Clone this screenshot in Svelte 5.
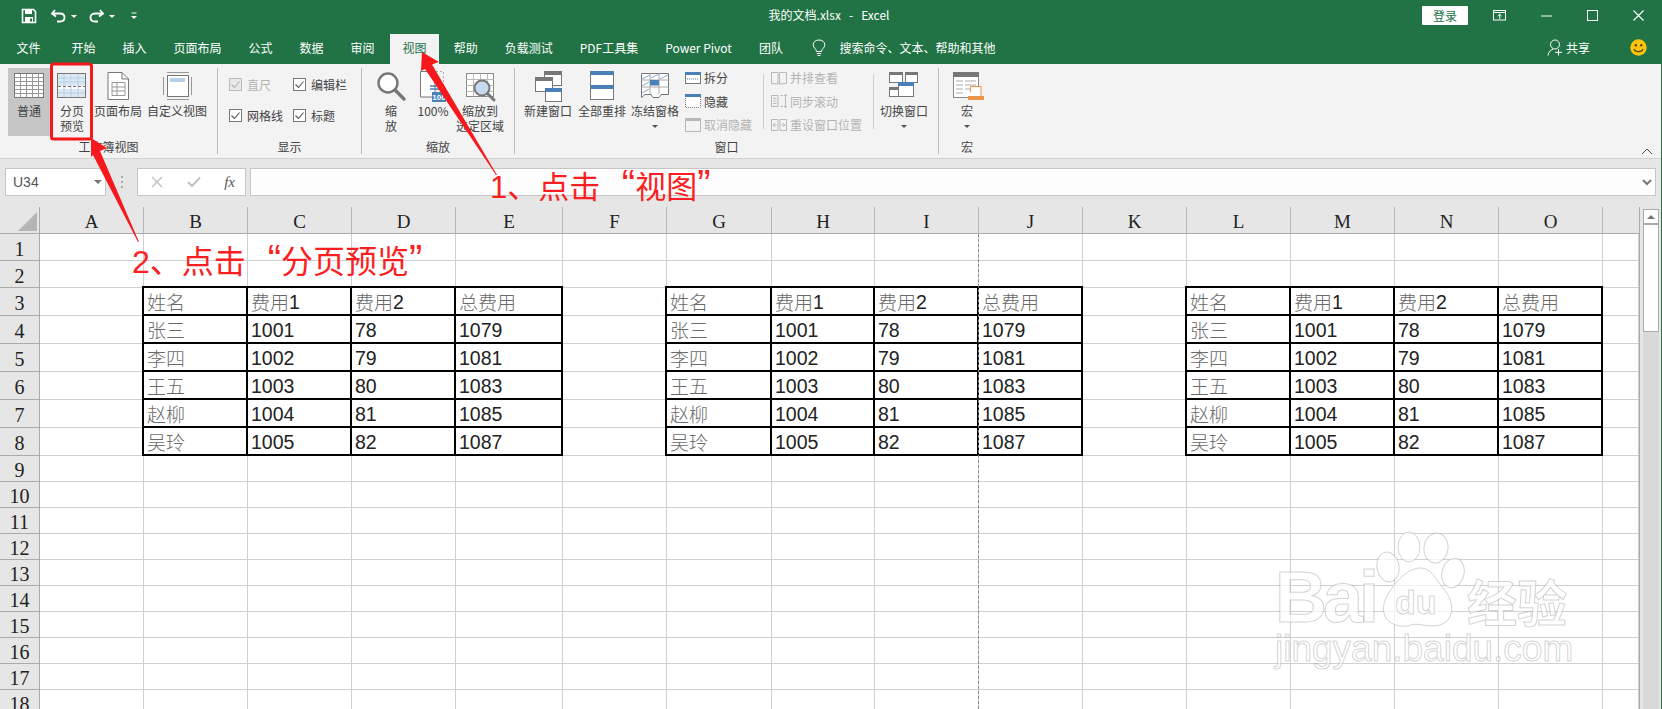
<script>
  const letters = ['A','B','C','D','E','F','G','H','I','J','K','L','M','N','O','P'];
  const rowNums = Array.from({ length: 18 }, (_, i) => i + 1);
  const data = [
    ['姓名','费用1','费用2','总费用'],
    ['张三','1001','78','1079'],
    ['李四','1002','79','1081'],
    ['王五','1003','80','1083'],
    ['赵柳','1004','81','1085'],
    ['吴玲','1005','82','1087']
  ];
  const inTable = (r, c) => r >= 3 && r <= 8 && c % 5 !== 0 && c < 15;
  const value = (r, c) => {
    const m = data[r - 3][c % 5 - 1].match(/^(\D*)(\d*)$/);
    return { cn: m[1], num: m[2] };
  };
  const tabs = ['开始','插入','页面布局','公式','数据','审阅','视图','帮助','负载测试','PDF工具集','Power Pivot','团队'];
  const gridD = (x0, y0, w, h, dx, dy) => {
    let d = '';
    for (let x = x0 + dx; x < x0 + w; x += dx) d += `M${x} ${y0}V${y0 + h}`;
    for (let y = y0 + dy; y < y0 + h; y += dy) d += `M${x0} ${y}H${x0 + w}`;
    return d;
  };
</script>

<div class="page">
  <header class="head">
    <div class="titlebar">
      <div class="qat">
        <svg class="save" width="16" height="16" viewBox="0 0 16 16"><path d="M1.5 1.5H12.5L14.5 3.5V14.5H1.5Z" fill="none" stroke="#fff" stroke-width="1.6"/><rect x="4" y="2" width="7" height="4" fill="#fff"/><rect x="4" y="9" width="8" height="5" fill="#fff"/><rect x="9" y="10.5" width="2" height="3" fill="#217346"/></svg>
        <svg class="undo" width="17" height="16" viewBox="0 0 17 16"><path d="M5 2L2 5.5L6 8.5M2.5 5.5H10C13 5.5 14.5 7.5 14.5 9.5C14.5 11.5 13 13.5 10 13.5H7" fill="none" stroke="#fff" stroke-width="1.8"/></svg>
        <span class="tri"></span>
        <svg class="redo" width="17" height="16" viewBox="0 0 17 16"><path d="M12 2L15 5.5L11 8.5M14.5 5.5H7C4 5.5 2.5 7.5 2.5 9.5C2.5 11.5 4 13.5 7 13.5H10" fill="none" stroke="#fff" stroke-width="1.8"/></svg>
        <span class="tri"></span>
        <svg class="more" width="8" height="8" viewBox="0 0 8 8"><path d="M1.5 1H6.5" stroke="#fff"/><path d="M1 4H7L4 7Z" fill="#fff"/></svg>
      </div>
      <div class="doc">我的文档.xlsx&nbsp;&nbsp;&nbsp;-&nbsp;&nbsp;&nbsp;Excel</div>
      <div class="win">
        <div class="login">登录</div>
        <div class="wbtn"><svg width="14" height="11" viewBox="0 0 14 11"><rect x=".5" y=".5" width="12" height="9.5" fill="none" stroke="#fff"/><path d="M1 2.5H12.5" stroke="#fff"/><path d="M6.7 9V4.5M4.8 6L6.7 4.2L8.6 6" fill="none" stroke="#fff"/></svg></div>
        <div class="wbtn"><svg width="11" height="2" viewBox="0 0 11 2"><path d="M0 1H11" stroke="#fff"/></svg></div>
        <div class="wbtn"><svg width="11" height="11" viewBox="0 0 11 11"><rect x=".5" y=".5" width="10" height="10" fill="none" stroke="#fff"/></svg></div>
        <div class="wbtn"><svg width="11" height="11" viewBox="0 0 11 11"><path d="M.5 .5L10.5 10.5M10.5 .5L.5 10.5" stroke="#fff" stroke-width="1.1"/></svg></div>
      </div>
    </div>
    <nav class="tabs">
      <div class="tab first">文件</div>
      {#each tabs as t}
        <div class="tab" class:active={t === '视图'}>{t}</div>
      {/each}
      <svg class="bulb" width="14" height="18" viewBox="0 0 14 18"><path d="M4.5 12.5C4.5 10 1.2 9 1.2 5.8C1.2 3 3.7 1 7 1C10.3 1 12.8 3 12.8 5.8C12.8 9 9.5 10 9.5 12.5ZM4.8 14.5H9.2M5.5 16.5H8.5" fill="none" stroke="#fff"/></svg>
      <div class="search">搜索命令、文本、帮助和其他</div>
      <div class="share">
        <svg width="16" height="17" viewBox="0 0 16 17"><circle cx="8" cy="5.5" r="4.5" fill="none" stroke="#fff"/><path d="M1 16.5C1.5 13 3.5 11 6 10.2" fill="none" stroke="#fff"/><path d="M11.5 10V16.5M8 13.3H15" stroke="#fff"/></svg>
        <span>共享</span>
      </div>
      <svg class="smile" width="17" height="17" viewBox="0 0 17 17"><circle cx="8.5" cy="8.5" r="8.2" fill="#fcc30f"/><circle cx="5.8" cy="6.3" r="1.2" fill="#5a4300"/><circle cx="11.2" cy="6.3" r="1.2" fill="#5a4300"/><path d="M4 10C5 13.5 12 13.5 13 10" fill="none" stroke="#5a4300" stroke-width="1.1"/></svg>
    </nav>
  </header>

  <section class="ribbon">
    <div class="group g1">
      <div class="body">
        <div class="big selected" style="--w:42px">
          <svg width="36" height="36" viewBox="0 0 36 36"><rect x="3.5" y="5.5" width="29" height="24" fill="#fff" stroke="#777"/><path d={gridD(3.5, 5.5, 29, 24, 6, 4)} stroke="#999" fill="none"/></svg>
          <span>普通</span>
        </div>
        <div class="big split" style="--w:40px">
          <svg width="36" height="36" viewBox="0 0 36 36"><rect x="3.5" y="5.5" width="28" height="24" fill="#fff" stroke="#777"/><rect x="4" y="6" width="13" height="12" fill="#dde8f5"/><rect x="18" y="6" width="13" height="12" fill="#dde8f5"/><rect x="4" y="21" width="27" height="8" fill="#dde8f5"/><path d="M10 6V29M17 6V29M24 6V29M4 10H31M4 14H31M4 25H31" stroke="#b8cde4" fill="none"/><path d="M4 18.5H31" stroke="#777" stroke-dasharray="3 2"/></svg>
          <span>分页<br/>预览</span>
        </div>
        <div class="big" style="--w:48px">
          <svg width="36" height="36" viewBox="0 0 36 36"><path d="M8 4.5H22L28.5 11V31.5H8Z" fill="#fff" stroke="#777"/><path d="M22 4.5V11H28.5" fill="none" stroke="#777"/><path d="M12 14.5H25V27.5H12ZM12 19H25M12 23H25M17 14.5V27.5" fill="none" stroke="#999"/></svg>
          <span>页面布局</span>
        </div>
        <div class="big custom" style="--w:62px">
          <svg width="36" height="36" viewBox="0 0 36 36"><rect x="8.5" y="7.5" width="21" height="21" fill="#fff" stroke="#777"/><rect x="11" y="10" width="15" height="4" fill="#b8cfe6"/><path d="M4.5 9V27M32.5 9V27M8 4.5H30M8 31.5H30" stroke="#999" fill="none"/></svg>
          <span>自定义视图</span>
        </div>
      </div>
      <div class="glabel">工作簿视图</div>
    </div>

    <div class="group g2">
      <div class="body checks">
        <div class="ck off"><i><svg width="11" height="11" viewBox="0 0 11 11"><path d="M1.5 5.5L4.5 8.5L9.5 2.5" fill="none" stroke="#b5b5b5" stroke-width="1.1"/></svg></i>直尺</div>
        <div class="ck"><i><svg width="11" height="11" viewBox="0 0 11 11"><path d="M1.5 5.5L4.5 8.5L9.5 2.5" fill="none" stroke="#555" stroke-width="1.1"/></svg></i>编辑栏</div>
        <div class="ck"><i><svg width="11" height="11" viewBox="0 0 11 11"><path d="M1.5 5.5L4.5 8.5L9.5 2.5" fill="none" stroke="#555" stroke-width="1.1"/></svg></i>网格线</div>
        <div class="ck"><i><svg width="11" height="11" viewBox="0 0 11 11"><path d="M1.5 5.5L4.5 8.5L9.5 2.5" fill="none" stroke="#555" stroke-width="1.1"/></svg></i>标题</div>
      </div>
      <div class="glabel">显示</div>
    </div>

    <div class="group g3">
      <div class="body">
        <div class="big" style="--w:48px">
          <svg width="36" height="36" viewBox="0 0 36 36"><circle cx="15" cy="15" r="9.5" fill="#fff" stroke="#777" stroke-width="2.4"/><path d="M22 22L31 31" stroke="#777" stroke-width="3.4" stroke-linecap="round"/></svg>
          <span>缩<br/>放</span>
        </div>
        <div class="big" style="--w:36px">
          <svg width="36" height="36" viewBox="0 0 36 36"><path d="M5.5 3.5H20V29H5.5Z" fill="#fff" stroke="#777"/><path d="M21 3.5H28.5V24" fill="none" stroke="#aaa" stroke-dasharray="2 2"/><path d="M15 18H24M15 21H24" stroke="#4a7fb7" stroke-width="1.4"/><rect x="17" y="24" width="14" height="10" fill="#4a7fb7"/><text x="24" y="32" class="badge">100</text></svg>
          <span>100%</span>
        </div>
        <div class="big" style="--w:58px">
          <svg width="36" height="36" viewBox="0 0 36 36"><rect x="4.5" y="5.5" width="27" height="23" fill="#fff" stroke="#8a8a8a"/><path d={gridD(4.5, 5.5, 27, 23, 7, 6)} stroke="#bbb" fill="none"/><circle cx="20" cy="20" r="7.5" fill="#c5d9ef" stroke="#777" stroke-width="2"/><path d="M25.5 25.5L32 32" stroke="#777" stroke-width="3" stroke-linecap="round"/></svg>
          <span>缩放到<br/>选定区域</span>
        </div>
      </div>
      <div class="glabel">缩放</div>
    </div>

    <div class="group g4">
      <div class="body">
        <div class="big" style="--w:54px">
          <svg width="36" height="36" viewBox="0 0 36 36"><rect x="14.5" y="3.5" width="17" height="14" fill="#fff" stroke="#777"/><rect x="14" y="3" width="18" height="4" fill="#777"/><rect x="5.5" y="9.5" width="17" height="14" fill="#fff" stroke="#777"/><rect x="5" y="9" width="18" height="4" fill="#777"/><rect x="15.5" y="20.5" width="16" height="13" fill="#fff" stroke="#777"/><rect x="15" y="20" width="17" height="4" fill="#4a7fb7"/></svg>
          <span>新建窗口</span>
        </div>
        <div class="big" style="--w:54px">
          <svg width="36" height="36" viewBox="0 0 36 36"><rect x="6.5" y="3.5" width="23" height="28" fill="#fff" stroke="#777"/><rect x="6" y="3" width="24" height="4" fill="#4a7fb7"/><rect x="6" y="17" width="24" height="4" fill="#4a7fb7"/></svg>
          <span>全部重排</span>
        </div>
        <div class="big" style="--w:52px">
          <svg width="36" height="36" viewBox="0 0 36 36"><path d="M4.5 5.5H31.5V26.5H24L22 29.5H16L14 26.5H8L4.5 29.5Z" fill="#fff" stroke="#777"/><path d="M4.5 12H31.5M4.5 19H31.5M13 5.5V26M22 5.5V26" stroke="#aaa" fill="none"/><rect x="13" y="12" width="9" height="5.5" fill="#4a7fb7"/><path d="M5 11L13 7M14 10L22 6M23 11L31 7M5 18L12 14M5 25L12 21" stroke="#9dbbdb" stroke-width="1.2" fill="none"/></svg>
          <span>冻结窗格</span>
          <b class="caret"></b>
        </div>
        <div class="smalls">
          <div class="sm"><svg width="16" height="14" viewBox="0 0 16 14"><rect x=".5" y="1.5" width="15" height="11" fill="#fff" stroke="#777"/><rect x="0" y="1" width="16" height="3" fill="#4a7fb7"/><path d="M2 8H14" stroke="#4a7fb7" stroke-dasharray="1 1"/></svg>拆分</div>
          <div class="sm"><svg width="16" height="14" viewBox="0 0 16 14"><path d="M.5 2V13.5H15.5V2" fill="#fff" stroke="#777" stroke-dasharray="1 1"/><rect x="0" y="0" width="16" height="3" fill="#4a7fb7"/></svg>隐藏</div>
          <div class="sm off"><svg width="16" height="14" viewBox="0 0 16 14"><rect x=".5" y=".5" width="15" height="13" fill="none" stroke="#b9b9b9"/><rect x="0" y="0" width="16" height="3" fill="#b9b9b9"/></svg>取消隐藏</div>
        </div>
        <div class="vsep"></div>
        <div class="smalls second">
          <div class="sm off"><svg width="16" height="14" viewBox="0 0 16 14"><path d="M.5 1.5H7V13L.5 12.5ZM8.5 1.5H15.5V12.5L8.5 13Z" fill="none" stroke="#b9b9b9"/></svg>并排查看</div>
          <div class="sm off"><svg width="16" height="14" viewBox="0 0 16 14"><path d="M.5 1.5H7V12.5H.5ZM9.5 1.5H12M9.5 12.5H12M14.5 0V14M13 2L14.5 .5L16 2M13 12L14.5 13.5L16 12M2 4.5H5.5M2 7H5.5M2 9.5H5.5" fill="none" stroke="#b9b9b9"/></svg>同步滚动</div>
          <div class="sm off"><svg width="16" height="14" viewBox="0 0 16 14"><path d="M.5 1.5H7V12.5H.5ZM9 1.5H15.5V12.5H9ZM2 7H5.5M4 5L2 7L4 9M10.5 7H14M12 5L14 7L12 9" fill="none" stroke="#b9b9b9"/></svg>重设窗口位置</div>
        </div>
        <div class="vsep"></div>
        <div class="big" style="--w:60px">
          <svg width="36" height="36" viewBox="0 0 36 36"><rect x="3.5" y="4.5" width="13" height="10" fill="#fff" stroke="#777"/><rect x="3" y="4" width="14" height="3" fill="#777"/><rect x="19.5" y="4.5" width="12" height="10" fill="#fff" stroke="#777"/><rect x="19" y="4" width="13" height="3" fill="#777"/><rect x="3.5" y="19.5" width="10" height="9" fill="#fff" stroke="#777"/><rect x="3" y="19" width="11" height="3" fill="#777"/><rect x="12.5" y="14.5" width="15" height="14" fill="#fff" stroke="#777"/><rect x="12" y="14" width="16" height="4" fill="#4a7fb7"/></svg>
          <span>切换窗口</span>
          <b class="caret"></b>
        </div>
      </div>
      <div class="glabel">窗口</div>
    </div>

    <div class="group g5">
      <div class="body">
        <div class="big" style="--w:56px">
          <svg width="36" height="36" viewBox="0 0 36 36"><rect x="4.5" y="5.5" width="25" height="24" fill="#fff" stroke="#8a8a8a"/><rect x="4" y="4" width="26" height="5" fill="#777"/><path d="M7 13H14M16 13H27M7 17H14M16 17H27M7 21H14M16 21H22M7 25H14" stroke="#aaa"/><path d="M21.5 24V18.5H32V30" fill="#fff" stroke="#e8964b"/><rect x="19" y="28" width="16" height="4" fill="#e8964b"/></svg>
          <span>宏</span>
          <b class="caret"></b>
        </div>
      </div>
      <div class="glabel">宏</div>
    </div>
    <svg class="collapse" width="12" height="7" viewBox="0 0 12 7"><path d="M1 6L6 1L11 6" fill="none" stroke="#555"/></svg>
  </section>

  <section class="fbar">
    <div class="namebox"><span>U34</span><b class="caret dark"></b></div>
    <div class="dots"></div>
    <div class="fbtns">
      <svg width="12" height="12" viewBox="0 0 12 12"><path d="M1 1L11 11M11 1L1 11" stroke="#c4c4c4" stroke-width="1.6"/></svg>
      <svg width="14" height="12" viewBox="0 0 14 12"><path d="M1 6L5 10L13 1.5" fill="none" stroke="#c4c4c4" stroke-width="2"/></svg>
      <span class="fx">fx</span>
    </div>
    <div class="finput"><svg width="10" height="7" viewBox="0 0 10 7"><path d="M1 1L5 5L9 1" fill="none" stroke="#777" stroke-width="2"/></svg></div>
  </section>

  <main class="sheetwrap">
    <div class="sheet">
      <div class="corner"><i></i></div>
      {#each letters as l}
        <div class="ch">{l === 'P' ? '' : l}</div>
      {/each}
      {#each rowNums as r}
        <div class="rh">{r}</div>
        {#each letters as _, c}
          {#if inTable(r, c)}
            {@const v = value(r, c)}
            <div class="cell t"><span class="cn">{v.cn}</span><span class="num">{v.num}</span></div>
          {:else}
            <div class="cell"></div>
          {/if}
        {/each}
      {/each}
    </div>
    <aside class="vscroll">
      <div class="sb"><b></b></div>
      <div class="thumb"></div>
      <div class="track"></div>
    </aside>
  </main>

  <div class="pagebreak"></div>

  <div class="wm">
    <svg class="paw" width="100" height="100" viewBox="0 0 100 100"><g fill="rgba(255,255,255,.7)" stroke="rgba(150,150,150,.42)"><ellipse cx="18" cy="37" rx="11" ry="15" transform="rotate(-10 18 37)"/><ellipse cx="39" cy="17" rx="11" ry="15"/><ellipse cx="66" cy="18" rx="12" ry="15" transform="rotate(8 66 18)"/><ellipse cx="83" cy="43" rx="11" ry="15" transform="rotate(14 83 43)"/><path d="M50 38C62 38 66 50 76 62C86 76 84 96 62 96C54 96 46 92 38 96C20 98 8 86 16 68C22 56 36 38 50 38Z"/></g></svg>
    <span class="bai">Bai</span>
    <span class="du">du</span>
    <span class="jy">经验</span>
    <span class="url">jingyan.baidu.com</span>
  </div>

  <svg class="marks" width="1662" height="709" viewBox="0 0 1662 709">
    <rect x="51.5" y="64" width="40" height="75" rx="2" fill="none" stroke="#f5181c" stroke-width="3"/>
    <path d="M422 52L439 62L432 64.5L497 175L496 175L425 69L421 71Z" fill="#f5181c"/>
    <path d="M91 138L107 148L100 151L139 242L138 242L93 155L91 157Z" fill="#f5181c"/>
  </svg>
  <div class="note n1">1、点击 <span class="q open">“</span>视图<span class="q">”</span></div>
  <div class="note n2">2、点击 <span class="q open">“</span>分页预览<span class="q">”</span></div>
</div>

<style>
  :global(body) { margin: 0; background: #fff; }
  .page {
    position: relative; width: 1662px; height: 709px; overflow: hidden;
    font: 12px/15px "Noto Sans CJK SC", "Liberation Sans", sans-serif; color: #444;
  }
  .head { background: #217346; color: #fff; height: 64px; }
  .titlebar { height: 34px; display: grid; grid-template-columns: 1fr auto 1fr; align-items: center; }
  .qat { display: flex; align-items: center; padding: 0 0 2px 21px; }
  .undo { margin-left: 13px; }
  .redo { margin-left: 11px; }
  .tri { width: 0; height: 0; border: 3px solid transparent; border-top-color: #fff; border-bottom: 0; margin-left: 4px; }
  .more { margin-left: 15px; }
  .doc { padding: 0 4px 5px 0; font-size: 12px; }
  .win { display: flex; justify-content: flex-end; align-items: center; padding: 0 1px 3px 0; }
  .login { width: 46px; height: 19px; line-height: 19px; background: #fff; color: #217346; text-align: center; border-radius: 1px; margin-right: 9px; font-size: 12px; }
  .wbtn { width: 46px; height: 30px; display: flex; align-items: center; justify-content: center; }
  .tabs { height: 30px; display: flex; align-items: center; padding-left: 3px; position: relative; }
  .tab { padding: 0 13.5px; height: 30px; line-height: 27px; white-space: nowrap; }
  .tab.first { margin-right: 4px; }
  .tab.active { background: #f3f3f3; color: #217346; padding: 0 12.5px; margin: 0 1px 0 2px; }
  .bulb { margin: 0 0 2px 16px; }
  .search { margin: 0 0 3px 13px; }
  .share { margin: 0 0 3px auto; display: flex; align-items: center; gap: 3px; }
  .smile { margin: 0 15px 3px 40px; }

  .ribbon { position: relative; height: 90px; padding-top: 4px; box-sizing: content-box; background: #f3f3f3; border-bottom: 1px solid #d2d2d2; display: flex; }
  .group { height: 86px; border-right: 1px solid #bcbcbc; box-sizing: border-box; display: flex; flex-direction: column; flex: none; }
  .g1 { width: 218px; } .g2 { width: 144px; } .g3 { width: 153px; } .g4 { width: 424px; }
  .g5 { width: 56px; border-right: 0; }
  .body { height: 68px; display: flex; }
  .g1 .body { padding-left: 8px; gap: 2px; }
  .g3 .body { padding-left: 5px; }
  .g4 .body { padding-left: 6px; }
  .glabel { text-align: center; line-height: 22px; height: 18px; color: #444; }
  .big { width: var(--w); height: 68px; flex: none; display: flex; flex-direction: column; align-items: center; text-align: center; white-space: nowrap; position: relative; }
  .big svg { flex: none; display: block; }
  .big span { line-height: 15px; margin-top: -1px; }
  .big.selected { background: #c6c6c6; }
  .big.custom { margin-left: 2px; }
  .caret { width: 0; height: 0; border: 3px solid transparent; border-top: 3.5px solid #555; border-bottom: 0; margin-top: 7px; }
  .checks { display: grid; grid-template-columns: 64px 70px; grid-auto-rows: 31px; padding: 1px 0 0 11px; box-sizing: border-box; }
  .ck { display: flex; align-items: center; gap: 5px; }
  .ck i { width: 13px; height: 13px; background: #fff; border: 1px solid #777; box-sizing: border-box; display: flex; align-items: center; justify-content: center; }
  .ck.off { color: #b3b3b3; }
  .ck.off i { border-color: #bbb; background: #e9e9e9; }
  .smalls { margin: -2px 0 0 4px; width: 78px; flex: none; }
  .smalls.second { margin-left: 7px; width: 102px; }
  .sm { height: 23.5px; display: flex; align-items: center; gap: 3px; white-space: nowrap; }
  .sm.off { color: #b3b3b3; }
  .vsep { width: 1px; height: 55px; margin-top: 6px; background: #cfcfcf; flex: none; }
  .badge { font: bold 8px "Liberation Sans", sans-serif; fill: #fff; text-anchor: middle; }
  .collapse { position: absolute; right: 9px; top: 84px; }

  .fbar { height: 48px; background: #e6e6e6; display: flex; align-items: center; padding: 0 6px 2px 5px; box-sizing: border-box; }
  .namebox { width: 101px; height: 28px; box-sizing: border-box; border: 1px solid #c6c6c6; background: #fff; display: flex; align-items: center; justify-content: space-between; padding: 0 3px 0 7px; font: 14px "Liberation Sans", sans-serif; color: #555; }
  .namebox .caret { margin: 0; border-width: 4px; border-top-width: 4px; border-bottom: 0; border-top-color: #777; }
  .dots { width: 2px; height: 12px; margin: 0 14px 0 15px; background: repeating-linear-gradient(#aaa 0 2px, transparent 2px 5px); }
  .fbtns { width: 109px; height: 28px; box-sizing: border-box; border: 1px solid #c6c6c6; background: #fff; display: flex; align-items: center; justify-content: space-between; padding: 0 10px 0 13px; margin-right: 4px; }
  .fx { font: italic 15px "Liberation Serif", serif; color: #555; }
  .finput { flex: 1; height: 28px; box-sizing: border-box; border: 1px solid #c6c6c6; background: #fdfdfd; display: flex; align-items: center; justify-content: flex-end; padding-right: 3px; }

  .sheetwrap { display: flex; height: 502px; background: #e6e6e6; }
  .sheet {
    width: 1639px; flex: none; display: grid; background: #fff; border-right: 1px solid #ababab;
    grid-template-columns: 40px repeat(4, 104px) 107px 104px 105px 103px repeat(7, 104px) 36px;
    grid-template-rows: 27px 27px 27px repeat(6, 28px) repeat(10, 26px);
    box-sizing: content-box; overflow: hidden; height: 502px; align-content: start;
    font-family: "Liberation Serif", serif; color: #222;
  }
  .corner { background: #e6e6e6; border-right: 1px solid #ababab; border-bottom: 1px solid #ababab; box-sizing: border-box; display: flex; align-items: flex-end; justify-content: flex-end; padding: 0 2px 2px 0; }
  .corner i { width: 19px; height: 19px; background: #b5b5b5; clip-path: polygon(100% 0, 100% 100%, 0 100%); }
  .ch { background: #e6e6e6; border-right: 1px solid #b5b5b5; border-bottom: 1px solid #ababab; box-sizing: border-box; text-align: center; font-size: 19px; line-height: 30px; }
  .ch:nth-child(17) { border-right: 0; }
  .rh { background: #e6e6e6; border-right: 1px solid #ababab; border-bottom: 1px solid #ababab; box-sizing: border-box; text-align: center; font-size: 20px; display: flex; align-items: center; justify-content: center; padding-top: 4px; }
  .cell { border-right: 1px solid #d0d0d0; border-bottom: 1px solid #d0d0d0; box-sizing: border-box; white-space: nowrap; font-family: "Liberation Sans", "Noto Sans CJK SC", sans-serif; font-size: 19.5px; line-height: 27px; padding-left: 3px; position: relative; }
  .cell.t::before { content: ""; position: absolute; left: -2px; top: -2px; right: -1px; bottom: -1px; border: 2px solid #000; }
  .cn { color: #6a6a6a; font-size: 19px; font-family: "Noto Sans CJK SC", sans-serif; font-weight: 300; }
  .num { color: #222; vertical-align: 1px; }

  .vscroll { flex: 1; padding: 2px 3px 0; display: flex; flex-direction: column; }
  .sb { height: 15px; box-sizing: border-box; border: 1px solid #ababab; background: #fff; display: flex; align-items: center; justify-content: center; }
  .sb b { width: 0; height: 0; border: 4px solid transparent; border-bottom: 4px solid #777; border-top: 0; }
  .thumb { height: 108px; box-sizing: border-box; border: 1px solid #ababab; background: #fff; margin-top: 0; }
  .track { flex: 1; background: #d9d9d9; }

  .page::after { content: ""; position: absolute; right: 0; top: 0; bottom: 0; width: 1px; background: #217346; }
  .pagebreak { position: absolute; left: 978px; top: 234px; bottom: 0; width: 0; border-left: 1px dashed #8a8a8a; }

  .wm { position: absolute; left: 0; top: 0; }
  .wm span { position: absolute; white-space: nowrap; color: rgba(255,255,255,.7); -webkit-text-stroke: 1px rgba(150,150,150,.42); }
  .paw { position: absolute; left: 1370px; top: 530px; }
  .bai { left: 1275px; top: 552px; font: bold 72px/90px "Liberation Sans", sans-serif; letter-spacing: -4px; }
  .du { left: 1395px; top: 582px; font: bold 34px/40px "Liberation Sans", sans-serif; }
  .jy { left: 1467px; top: 565px; font: bold 50px/70px "Noto Sans CJK SC", sans-serif; }
  .url { left: 1275px; top: 627px; font: 37px/44px "Liberation Sans", sans-serif; }

  .marks { position: absolute; left: 0; top: 0; pointer-events: none; }
  .note { position: absolute; white-space: nowrap; color: #fb1e22; font: 31px/40px "Liberation Sans", "Noto Sans CJK SC", sans-serif; }
  .q { font-size: 40px; line-height: 0; }
  .q.open { margin-left: 13px; }
  .n1 { left: 490px; top: 168px; }
  .n2 { left: 132px; top: 242px; font-size: 32px; }
</style>
